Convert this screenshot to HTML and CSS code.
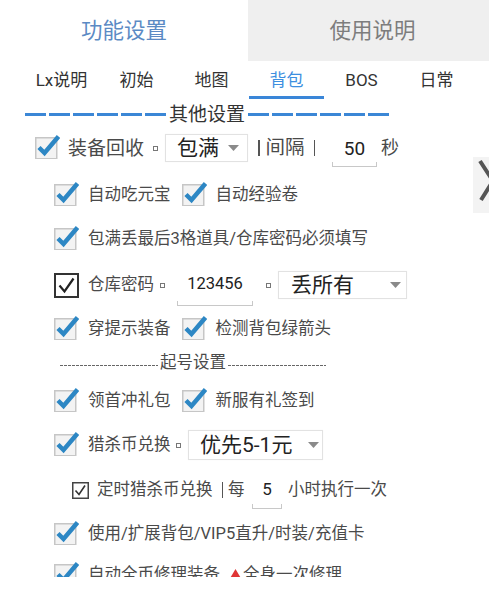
FILE: index.html
```html
<!DOCTYPE html>
<html lang="zh-CN">
<head>
<meta charset="utf-8">
<title>功能设置</title>
<link rel="stylesheet" href="styles.css">
</head>
<body>
<div class="top">
  <div class="top-tab active">功能设置</div>
  <div class="top-tab other">使用说明</div>
</div>
<nav class="subtabs">
  <span class="subtab">Lx说明</span>
  <span class="subtab">初始</span>
  <span class="subtab">地图</span>
  <span class="subtab active">背包</span>
  <span class="subtab">BOS</span>
  <span class="subtab">日常</span>
</nav>
<div class="sec">
  <i class="dash"></i><i class="dash"></i><i class="dash"></i><i class="dash"></i><i class="dash"></i><i class="dash"></i>
  <span class="sec-title">其他设置</span>
  <i class="dash"></i><i class="dash"></i><i class="dash"></i><i class="dash"></i><i class="dash"></i><i class="dash"></i>
</div>

<div class="list">
  <div class="row lv1 mt4">
    <svg class="cb" viewBox="0 0 25 26" width="25" height="26"><rect x="0.75" y="4.75" width="21" height="21" fill="#f3f3f3" stroke="#c6c6c6" stroke-width="1.5"/><path d="M4 14.5 L9.5 20 L23.5 3.5" fill="none" stroke="#2d87c4" stroke-width="4.5"/></svg>
    <span class="lbl lg">装备回收</span>
    <span class="dot d1"></span>
    <span class="sel sel-a"><span>包满</span><svg width="11" height="6" viewBox="0 0 11 6"><polygon points="0,0 11,0 5.5,6" fill="#8a8a8a"/></svg></span>
    <span class="bar b1"></span>
    <span class="lbl mid">间隔</span>
    <span class="bar b2"></span>
    <span class="field f50">50</span>
    <span class="lbl sec-unit">秒</span>
  </div>

  <div class="row lv2 mt17">
    <svg class="cb" viewBox="0 0 25 26" width="25" height="26"><rect x="0.75" y="4.75" width="21" height="21" fill="#f3f3f3" stroke="#c6c6c6" stroke-width="1.5"/><path d="M4 14.5 L9.5 20 L23.5 3.5" fill="none" stroke="#2d87c4" stroke-width="4.5"/></svg>
    <span class="lbl">自动吃元宝</span>
    <svg class="cb cb-next" viewBox="0 0 25 26" width="25" height="26"><rect x="0.75" y="4.75" width="21" height="21" fill="#f3f3f3" stroke="#c6c6c6" stroke-width="1.5"/><path d="M4 14.5 L9.5 20 L23.5 3.5" fill="none" stroke="#2d87c4" stroke-width="4.5"/></svg>
    <span class="lbl">自动经验卷</span>
  </div>

  <div class="row lv2">
    <svg class="cb" viewBox="0 0 25 26" width="25" height="26"><rect x="0.75" y="4.75" width="21" height="21" fill="#f3f3f3" stroke="#c6c6c6" stroke-width="1.5"/><path d="M4 14.5 L9.5 20 L23.5 3.5" fill="none" stroke="#2d87c4" stroke-width="4.5"/></svg>
    <span class="lbl">包满丢最后3格道具/仓库密码必须填写</span>
  </div>

  <div class="row lv2 mt16">
    <svg class="cb-plain" viewBox="0 0 25 25" width="25" height="25"><rect x="1" y="1" width="23" height="23" fill="#fff" stroke="#333" stroke-width="2"/><path d="M5.5 12.5 L10.5 18.5 L19.5 5.5" fill="none" stroke="#222" stroke-width="2.2"/></svg>
    <span class="lbl">仓库密码</span>
    <span class="dot d2"></span>
    <span class="field fpwd">123456</span>
    <span class="dot d3"></span>
    <span class="sel sel-b"><span>丢所有</span><svg width="11" height="6" viewBox="0 0 11 6"><polygon points="0,0 11,0 5.5,6" fill="#8a8a8a"/></svg></span>
  </div>

  <div class="row lv2">
    <svg class="cb" viewBox="0 0 25 26" width="25" height="26"><rect x="0.75" y="4.75" width="21" height="21" fill="#f3f3f3" stroke="#c6c6c6" stroke-width="1.5"/><path d="M4 14.5 L9.5 20 L23.5 3.5" fill="none" stroke="#2d87c4" stroke-width="4.5"/></svg>
    <span class="lbl">穿提示装备</span>
    <svg class="cb cb-next" viewBox="0 0 25 26" width="25" height="26"><rect x="0.75" y="4.75" width="21" height="21" fill="#f3f3f3" stroke="#c6c6c6" stroke-width="1.5"/><path d="M4 14.5 L9.5 20 L23.5 3.5" fill="none" stroke="#2d87c4" stroke-width="4.5"/></svg>
    <span class="lbl">检测背包绿箭头</span>
  </div>

  <div class="row sub-head mt4">
    <span class="hy"></span>
    <span class="sub-title">起号设置</span>
    <span class="hy"></span>
  </div>

  <div class="row lv2 mt8">
    <svg class="cb" viewBox="0 0 25 26" width="25" height="26"><rect x="0.75" y="4.75" width="21" height="21" fill="#f3f3f3" stroke="#c6c6c6" stroke-width="1.5"/><path d="M4 14.5 L9.5 20 L23.5 3.5" fill="none" stroke="#2d87c4" stroke-width="4.5"/></svg>
    <span class="lbl">领首冲礼包</span>
    <svg class="cb cb-next" viewBox="0 0 25 26" width="25" height="26"><rect x="0.75" y="4.75" width="21" height="21" fill="#f3f3f3" stroke="#c6c6c6" stroke-width="1.5"/><path d="M4 14.5 L9.5 20 L23.5 3.5" fill="none" stroke="#2d87c4" stroke-width="4.5"/></svg>
    <span class="lbl">新服有礼签到</span>
  </div>

  <div class="row lv2">
    <svg class="cb" viewBox="0 0 25 26" width="25" height="26"><rect x="0.75" y="4.75" width="21" height="21" fill="#f3f3f3" stroke="#c6c6c6" stroke-width="1.5"/><path d="M4 14.5 L9.5 20 L23.5 3.5" fill="none" stroke="#2d87c4" stroke-width="4.5"/></svg>
    <span class="lbl">猎杀币兑换</span>
    <span class="dot d4"></span>
    <span class="sel sel-c"><span>优先5-1元</span><svg width="11" height="6" viewBox="0 0 11 6"><polygon points="0,0 11,0 5.5,6" fill="#8a8a8a"/></svg></span>
  </div>

  <div class="row lv3 mt15">
    <svg class="cb-small" viewBox="0 0 17 17" width="17" height="17"><rect x="0.75" y="0.75" width="15.5" height="15.5" fill="#fff" stroke="#444" stroke-width="1.5"/><path d="M3.5 8.5 L7 12.5 L13 3.5" fill="none" stroke="#333" stroke-width="1.6"/></svg>
    <span class="lbl">定时猎杀币兑换</span>
    <span class="bar b3"></span>
    <span class="lbl every">每</span>
    <span class="field f5">5</span>
    <span class="lbl hours">小时执行一次</span>
  </div>

  <div class="row lv2">
    <svg class="cb" viewBox="0 0 25 26" width="25" height="26"><rect x="0.75" y="4.75" width="21" height="21" fill="#f3f3f3" stroke="#c6c6c6" stroke-width="1.5"/><path d="M4 14.5 L9.5 20 L23.5 3.5" fill="none" stroke="#2d87c4" stroke-width="4.5"/></svg>
    <span class="lbl">使用/扩展背包/VIP5直升/时装/充值卡</span>
  </div>

  <div class="row lv2 mt11">
    <svg class="cb" viewBox="0 0 25 26" width="25" height="26"><rect x="0.75" y="4.75" width="21" height="21" fill="#f3f3f3" stroke="#c6c6c6" stroke-width="1.5"/><path d="M4 14.5 L9.5 20 L23.5 3.5" fill="none" stroke="#2d87c4" stroke-width="4.5"/></svg>
    <span class="lbl">自动全币修理装备</span>
    <svg class="warn" viewBox="0 0 13 11" width="13" height="11"><polygon points="6.5,0 13,11 0,11" fill="#e03535"/></svg>
    <span class="lbl">全身一次修理</span>
  </div>
</div>

<div class="handle">
  <svg viewBox="0 0 16 56" width="16" height="56"><polyline points="7,4 20,24 8,43" fill="none" stroke="#555" stroke-width="4"/></svg>
</div>
</body>
</html>
```

FILE: styles.css
```css
html, body {
  margin: 0;
  padding: 0;
}
body {
  width: 489px;
  height: 589px;
  overflow: hidden;
  position: relative;
  background: #fff;
  font-family: Roboto, "Noto Sans CJK SC", sans-serif;
  color: #333;
  line-height: 1;
}

/* top tabs */
.top {
  display: grid;
  grid-template-columns: 248px 1fr;
  height: 61px;
}
.top-tab {
  display: flex;
  align-items: center;
  justify-content: center;
  font-size: 21.5px;
}
.top-tab.active {
  color: #5b8ac4;
}
.top-tab.other {
  background: #efefef;
  color: #7d7d7d;
  padding-left: 8px;
}

/* sub tabs */
.subtabs {
  display: flex;
  height: 38px;
  padding-left: 24px;
}
.subtab {
  width: 75px;
  box-sizing: border-box;
  display: flex;
  align-items: center;
  justify-content: center;
  font-size: 17px;
  color: #333;
  border-bottom: 3px solid transparent;
  padding-top: 3px;
}
.subtab.active {
  color: #3d8fe0;
  border-bottom-color: #3a86d8;
}

/* section title */
.sec {
  display: flex;
  align-items: center;
  gap: 3px;
  height: 30px;
  padding-left: 25px;
}
.dash {
  display: block;
  width: 21px;
  height: 3px;
  background: #3b87d6;
}
.sec-title {
  font-size: 19px;
  color: #333;
}

/* rows */
.list {
  height: 448px;
  overflow: hidden;
}
.row {
  display: flex;
  align-items: center;
  height: 30px;
  margin-top: 14px;
}
.mt4 { margin-top: 4px; }
.mt8 { margin-top: 8px; }
.mt11 { margin-top: 11px; }
.mt15 { margin-top: 15px; }
.mt16 { margin-top: 16px; }
.mt17 { margin-top: 17px; }

.lv1 { padding-left: 35px; }
.lv2 { padding-left: 54px; }
.lv3 { padding-left: 72px; }

.cb {
  flex: none;
  margin-bottom: 4px;
}
.cb-plain,
.cb-small {
  flex: none;
}
.cb-next {
  margin-left: 11px;
}
.lbl {
  font-size: 16.5px;
  color: #4a4a4a;
  margin-left: 9px;
  white-space: nowrap;
}
.lv1 .lbl.lg {
  font-size: 19px;
  margin-left: 8px;
}
.lbl.mid {
  font-size: 19.5px;
  margin-left: 6px;
}
.lbl.sec-unit {
  font-size: 18px;
  margin-left: 4px;
}
.lbl.every {
  margin-left: 5px;
}
.lbl.hours {
  margin-left: 6px;
}
.lv3 .cb-small + .lbl {
  margin-left: 8px;
}

.dot {
  flex: none;
  width: 3px;
  height: 3px;
  border: 1px solid #777;
}
.d1 { margin: 0 7px 0 9px; }
.d2 { margin: 0 12px 0 6px; }
.d3 { margin: 0 7px 0 13px; }
.d4 { margin: 0 7px 0 5.5px; }

.bar {
  flex: none;
  width: 1.5px;
  height: 16px;
  background: #555;
}
.b1 { margin-left: 10px; }
.b2 { margin-left: 9px; }
.b3 { margin-left: 9px; }

/* dropdowns */
.sel {
  flex: none;
  box-sizing: border-box;
  display: flex;
  align-items: center;
  justify-content: space-between;
  border: 1px solid #e2e2e2;
  box-shadow: 0 0 1px rgba(0,0,0,0.06);
  background: #fff;
  color: #222;
  font-size: 21px;
}
.sel-a {
  width: 83px;
  height: 28px;
  padding: 0 8px 0 11px;
}
.sel-b {
  width: 129px;
  height: 28px;
  padding: 0 5px 0 12px;
}
.sel-c {
  width: 135px;
  height: 30px;
  padding: 0 3px 0 11px;
}

/* underlined fields */
.field {
  flex: none;
  box-sizing: border-box;
  display: flex;
  align-items: center;
  justify-content: center;
  border-bottom: 1px solid #c8c8c8;
  background:
    linear-gradient(#c8c8c8, #c8c8c8) left bottom / 1px 4px no-repeat,
    linear-gradient(#c8c8c8, #c8c8c8) right bottom / 1px 4px no-repeat;
  color: #222;
}
.f50 {
  width: 45px;
  height: 30px;
  margin: 8px 0 0 17px;
  padding-bottom: 7px;
  font-size: 19px;
}
.fpwd {
  width: 76px;
  height: 30px;
  margin-top: 12px;
  padding-bottom: 13px;
  font-size: 16.5px;
}
.f5 {
  width: 30px;
  height: 26px;
  margin: 12px 0 0 7.5px;
  padding-bottom: 12px;
  font-size: 17px;
}

/* sub heading */
.sub-head {
  padding-left: 60px;
}
.hy {
  display: block;
  width: 98px;
  height: 1px;
  margin-top: 4px;
  background: repeating-linear-gradient(90deg, #666 0 3px, transparent 3px 4px);
}
.sub-title {
  font-size: 16.5px;
  color: #4a4a4a;
  margin: 0 2px;
}

.warn {
  flex: none;
  margin-left: 9px;
  margin-bottom: 2px;
}
.warn + .lbl {
  margin-left: 1px;
}

/* side handle overlay */
.handle {
  position: absolute;
  left: 473px;
  top: 157px;
  width: 16px;
  height: 56px;
  background: #f3f3f3;
  overflow: hidden;
}
.handle svg {
  display: block;
}
```
